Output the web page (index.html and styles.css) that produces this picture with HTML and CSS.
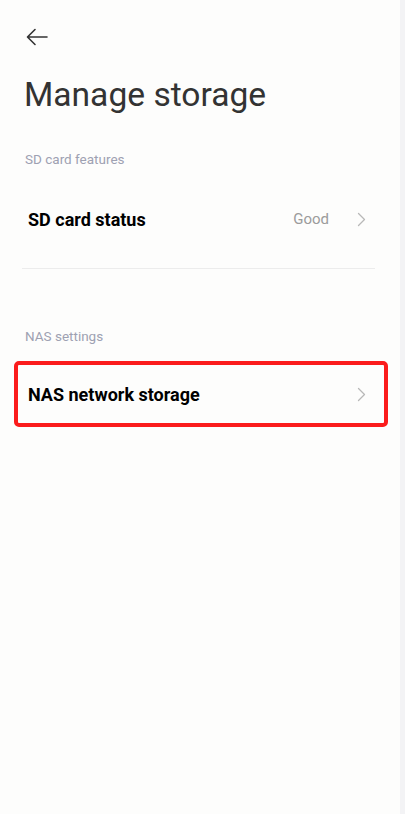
FILE: index.html
```html
<!DOCTYPE html>
<html lang="en">
<head>
<meta charset="utf-8">
<link rel="stylesheet" href="styles.css">
</head>
<body>
<div class="screen">
  <main class="page">
    <header class="topbar">
      <svg class="back" width="24" height="18" viewBox="0 0 24 18" aria-label="Back">
        <path d="M22 9H3M10 1.5L2.5 9L10 16.5" fill="none" stroke="#333" stroke-width="1.6" stroke-linecap="round" stroke-linejoin="round"/>
      </svg>
    </header>
    <h1 class="title">Manage storage</h1>

    <section class="group">
      <div class="group-label">SD card features</div>
      <div class="row">
        <span class="row-title">SD card status</span>
        <span class="row-value">Good</span>
        <svg class="chev" width="9" height="15" viewBox="0 0 9 15"><path d="M1.5 1.5L7.5 7.5L1.5 13.5" fill="none" stroke="#b8b8b8" stroke-width="1.3" stroke-linecap="round" stroke-linejoin="round"/></svg>
      </div>
    </section>

    <div class="divider"></div>

    <section class="group nas">
      <div class="group-label">NAS settings</div>
      <div class="row highlighted">
        <span class="row-title">NAS network storage</span>
        <svg class="chev" width="9" height="15" viewBox="0 0 9 15"><path d="M1.5 1.5L7.5 7.5L1.5 13.5" fill="none" stroke="#b8b8b8" stroke-width="1.3" stroke-linecap="round" stroke-linejoin="round"/></svg>
      </div>
    </section>
  </main>
  <div class="edge"></div>
</div>
</body>
</html>
```

FILE: styles.css
```css
* { box-sizing: border-box; }
html, body { margin: 0; padding: 0; }
body {
  background: #fdfdfc;
  font-family: Roboto, "Noto Sans", "Liberation Sans", sans-serif;
}
.screen {
  display: flex;
  min-height: 814px;
}
.page {
  flex: 1;
}
.edge {
  width: 5px;
  background: #f3f3f5;
}
.topbar {
  padding: 28px 0 0 25px;
  height: 46px;
}
.back { display: block; }
.title {
  margin: 29px 0 0 24px;
  font-size: 33.6px;
  font-weight: 400;
  line-height: 40px;
  color: #333333;
}
.group-label {
  padding-left: 25px;
  font-size: 13.5px;
  line-height: 16px;
  color: #9ea1b2;
}
.group { margin-top: 36px; }
.row {
  display: flex;
  align-items: center;
  height: 66px;
  margin-top: 19px;
  padding: 0 34px 0 28px;
}
.row-title {
  flex: 1;
  font-size: 18px;
  font-weight: 700;
  color: #000;
}
.row-value {
  font-size: 15px;
  color: #9b9b9b;
  margin-right: 28px;
}
.chev { display: block; }
.divider {
  height: 1px;
  background: #ececec;
  margin: 16px 25px 0 22px;
}
.nas { margin-top: 59px; }
.nas .row { margin-top: 17px; }
.highlighted {
  margin-left: 14px;
  margin-right: 12px;
  padding: 0 18px 0 10px;
  border: 4px solid #fb1c1c;
  border-radius: 5px;
}
```
